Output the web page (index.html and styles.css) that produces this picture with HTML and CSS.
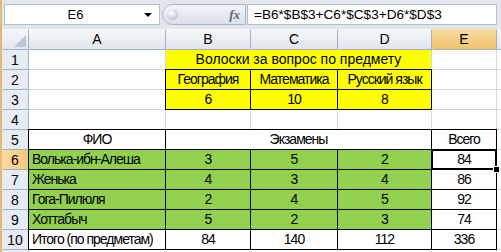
FILE: index.html
```html
<!DOCTYPE html>
<html lang="ru">
<head>
    <meta charset="UTF-8">
    <title>Волоски</title>
    <link rel="stylesheet" href="styles.css">
</head>
<body>
    <div class="excel">
        <div class="formula-bar">
            <div class="name-box">
                <span class="name">E6</span>
                <span class="drop"></span>
            </div>
            <div class="fx-btn">
                <span class="knob"></span>
                <span class="fx">fx</span>
            </div>
            <div class="formula">=B6*$B$3+C6*$C$3+D6*$D$3</div>
        </div>

        <div class="sheet">
            <!-- header row -->
            <div class="corner"><span class="tri"></span></div>
            <div class="col-hd">A</div>
            <div class="col-hd">B</div>
            <div class="col-hd">C</div>
            <div class="col-hd">D</div>
            <div class="col-hd sel">E</div>
            <div class="col-hd"></div>

            <!-- 1 -->
            <div class="row-hd">1</div>
            <div class="cell"></div>
            <div class="cell yellow span3 title">Волоски за вопрос по предмету</div>
            <div class="cell"></div>
            <div class="cell"></div>

            <!-- 2 -->
            <div class="row-hd">2</div>
            <div class="cell"></div>
            <div class="cell yellow bd">География</div>
            <div class="cell yellow bd">Математика</div>
            <div class="cell yellow bd">Русский язык</div>
            <div class="cell"></div>
            <div class="cell"></div>

            <!-- 3 -->
            <div class="row-hd">3</div>
            <div class="cell"></div>
            <div class="cell yellow bd">6</div>
            <div class="cell yellow bd">10</div>
            <div class="cell yellow bd">8</div>
            <div class="cell"></div>
            <div class="cell"></div>

            <!-- 4 -->
            <div class="row-hd">4</div>
            <div class="cell"></div>
            <div class="cell"></div>
            <div class="cell"></div>
            <div class="cell"></div>
            <div class="cell"></div>
            <div class="cell"></div>

            <!-- 5 -->
            <div class="row-hd">5</div>
            <div class="cell bd">ФИО</div>
            <div class="cell bd span3">Экзамены</div>
            <div class="cell bd">Всего</div>
            <div class="cell"></div>

            <!-- 6 -->
            <div class="row-hd sel">6</div>
            <div class="cell green bd left">Волька-ибн-Алеша</div>
            <div class="cell green bd">3</div>
            <div class="cell green bd">5</div>
            <div class="cell green bd">2</div>
            <div class="cell bd active">84<span class="handle"></span></div>
            <div class="cell"></div>

            <!-- 7 -->
            <div class="row-hd">7</div>
            <div class="cell green bd left">Женька</div>
            <div class="cell green bd">4</div>
            <div class="cell green bd">3</div>
            <div class="cell green bd">4</div>
            <div class="cell bd">86</div>
            <div class="cell"></div>

            <!-- 8 -->
            <div class="row-hd">8</div>
            <div class="cell green bd left">Гога-Пилюля</div>
            <div class="cell green bd">2</div>
            <div class="cell green bd">4</div>
            <div class="cell green bd">5</div>
            <div class="cell bd">92</div>
            <div class="cell"></div>

            <!-- 9 -->
            <div class="row-hd">9</div>
            <div class="cell green bd left">Хоттабыч</div>
            <div class="cell green bd">5</div>
            <div class="cell green bd">2</div>
            <div class="cell green bd">3</div>
            <div class="cell bd">74</div>
            <div class="cell"></div>

            <!-- 10 -->
            <div class="row-hd">10</div>
            <div class="cell bd left">Итого (по предметам)</div>
            <div class="cell bd">84</div>
            <div class="cell bd">140</div>
            <div class="cell bd">112</div>
            <div class="cell bd">336</div>
            <div class="cell"></div>

            <!-- 11 -->
            <div class="row-hd"></div>
            <div class="cell"></div>
            <div class="cell"></div>
            <div class="cell"></div>
            <div class="cell"></div>
            <div class="cell"></div>
            <div class="cell"></div>
        </div>
    </div>
</body>
</html>
```

FILE: styles.css
```css
body {
    margin: 0;
    background-color: #ffffff;
    font-family: "Liberation Sans", Arial, sans-serif;
    color: #000;
}
.excel {
    width: 501px;
    height: 252px;
    overflow: hidden;
    box-sizing: border-box;
    border-left: 2px solid #e3ba74;
}
/* formula bar */
.formula-bar {
    height: 29px;
    box-sizing: border-box;
    padding: 4px 0 4px 2px;
    display: flex;
    background-color: #e2e7ee;
}
.name-box {
    width: 156px;
    box-sizing: border-box;
    border: 1px solid #b4bfcc;
    background-color: #fff;
    display: flex;
    align-items: center;
    font-size: 13px;
}
.name-box .name {
    flex: 1;
    text-align: center;
    padding-left: 2px;
}
.name-box .drop {
    width: 0;
    height: 0;
    border-left: 4px solid transparent;
    border-right: 4px solid transparent;
    border-top: 4px solid #000;
    margin-right: 7px;
}
.fx-btn {
    width: 84px;
    margin-left: 2px;
    box-sizing: border-box;
    border: 1px solid #aab6c6;
    border-radius: 11px 0 0 11px;
    background: linear-gradient(#f3f5f8, #d9e0ea);
    display: flex;
    align-items: center;
    justify-content: space-between;
    padding: 0 5px 0 4px;
}
.knob {
    width: 11px;
    height: 11px;
    border-radius: 50%;
    background: radial-gradient(circle at 40% 35%, #ffffff, #a9b1bc);
}
.fx {
    font-family: "Liberation Serif", "Times New Roman", serif;
    font-style: italic;
    font-weight: bold;
    font-size: 13px;
    color: #5b6470;
}
.formula {
    width: 250px;
    margin-left: 1px;
    box-sizing: border-box;
    border: 1px solid #b4bfcc;
    background-color: #fff;
    font-size: 13.6px;
    line-height: 19px;
    padding-left: 6px;
}
/* sheet grid */
.sheet {
    display: grid;
    grid-template-columns: 26px 136px 84px 86px 93px 64px 1fr;
    grid-template-rows: 20px repeat(10, 19px) 12px;
    gap: 1px;
    background-color: #d0d7e5;
    font-size: 14px;
}
.corner {
    position: relative;
    background: linear-gradient(#f5f6f8, #e3e7ed);
    box-shadow: 1px 1px 0 #9eb0c6;
}
.corner .tri {
    position: absolute;
    right: 2px;
    bottom: 2px;
    width: 0;
    height: 0;
    border-left: 12px solid transparent;
    border-bottom: 12px solid #b7c6d9;
}
.col-hd,
.row-hd {
    display: flex;
    align-items: center;
    justify-content: center;
    box-shadow: 1px 1px 0 #9eb0c6;
}
.col-hd {
    background: linear-gradient(#f6f7f9, #e1e6ec);
}
.row-hd {
    background-color: #e7ecf3;
}
.col-hd.sel {
    background: linear-gradient(#f9dca6, #f1c36b);
}
.row-hd.sel {
    background: linear-gradient(90deg, #f9dba2, #f3c878);
}
.cell {
    background-color: #fff;
    display: flex;
    align-items: center;
    justify-content: center;
    white-space: nowrap;
    line-height: 19px;
    letter-spacing: -1px;
}
.cell.left {
    justify-content: flex-start;
    padding-left: 3px;
}
.title {
    letter-spacing: 0;
}
.span3 {
    grid-column: span 3;
}
.yellow {
    background-color: #ffff00;
}
.green {
    background-color: #92d050;
}
.bd {
    box-shadow: 0 0 0 1px #000;
}
.active {
    position: relative;
}
.active::before {
    content: "";
    position: absolute;
    left: -1px;
    top: -1px;
    right: -1px;
    bottom: -1px;
    border: 2px solid #000;
    box-shadow: inset 0 0 0 1px #fff;
}
.handle {
    position: absolute;
    right: -4px;
    bottom: -4px;
    width: 5px;
    height: 5px;
    background-color: #000;
    border: 1px solid #fff;
    z-index: 1;
}
```
